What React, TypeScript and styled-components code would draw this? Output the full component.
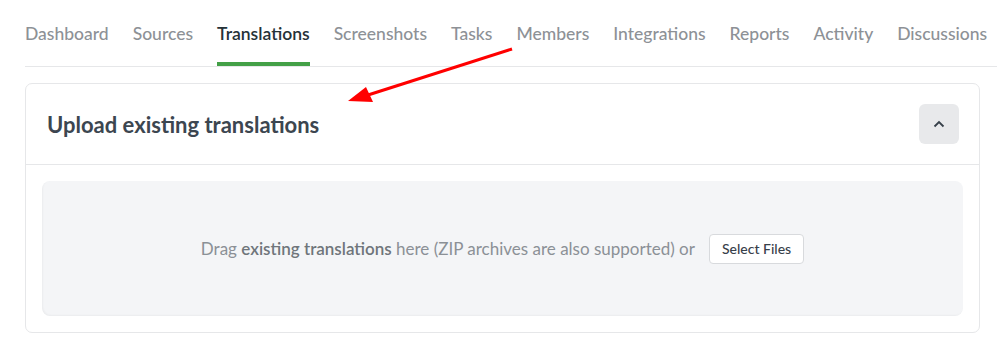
import { createGlobalStyle } from 'styled-components'
import styled from 'styled-components'

const Global = createGlobalStyle`
  body {
    margin: 0;
    background: #fff;
    font-family: Lato, 'Noto Sans', sans-serif;
  }
`

const Page = styled.div`
  position: relative;
  width: 997px;
  height: 342px;
  padding: 0 0 0 25px;
  box-sizing: border-box;
`

const Tabs = styled.nav`
  display: flex;
  gap: 24px;
  height: 66px;
  border-bottom: 1px solid #e6e7e9;
`

const Tab = styled.div<{ $active?: boolean }>`
  display: flex;
  align-items: center;
  height: 100%;
  box-sizing: border-box;
  padding-top: 5px;
  font-size: 17.5px;
  font-weight: ${(p) => (p.$active ? 600 : 500)};
  color: ${(p) => (p.$active ? '#263238' : '#8d9196')};
  border-bottom: 4px solid ${(p) => (p.$active ? '#43a047' : 'transparent')};
  margin-bottom: -1px;
  white-space: nowrap;
`

const Card = styled.section`
  margin-top: 16px;
  width: 955px;
  border: 1px solid #e6e7e9;
  border-radius: 7px;
  box-sizing: border-box;
`

const CardHeader = styled.header`
  display: flex;
  align-items: center;
  justify-content: space-between;
  height: 80px;
  padding: 0 20px 0 21px;
  border-bottom: 1px solid #e6e7e9;
`

const Title = styled.h2`
  margin: 0;
  font-size: 22px;
  font-weight: 700;
  color: #3c4650;
`

const CollapseButton = styled.button`
  width: 40px;
  height: 40px;
  border: none;
  border-radius: 6px;
  background: #e8e9eb;
  display: flex;
  align-items: center;
  justify-content: center;
  padding: 0;
`

const CardBody = styled.div`
  padding: 16px;
`

const Dropzone = styled.div`
  height: 135px;
  border-radius: 8px;
  background: #f4f5f7;
  box-shadow: inset 1px -1px 2px rgba(0, 0, 0, 0.04);
  display: flex;
  align-items: center;
  justify-content: center;
  gap: 14px;
  font-size: 17px;
  color: #8b9096;
`

const Strong = styled.b`
  font-weight: 600;
  color: #6f757b;
`

const SelectButton = styled.button`
  height: 30px;
  padding: 0 12px;
  border: 1px solid #d8dadd;
  border-radius: 4px;
  background: #fff;
  font-family: inherit;
  font-size: 14px;
  font-weight: 500;
  color: #37404a;
`

const Arrow = styled.svg`
  position: absolute;
  left: 0;
  top: 0;
  pointer-events: none;
`

const tabs = [
  'Dashboard',
  'Sources',
  'Translations',
  'Screenshots',
  'Tasks',
  'Members',
  'Integrations',
  'Reports',
  'Activity',
  'Discussions',
]

export default function App() {
  return (
    <Page>
      <Global />
      <Tabs>
        {tabs.map((t) => (
          <Tab key={t} $active={t === 'Translations'}>
            {t}
          </Tab>
        ))}
      </Tabs>
      <Card>
        <CardHeader>
          <Title>Upload existing translations</Title>
          <CollapseButton>
            <svg width="12" height="8" viewBox="0 0 12 8">
              <path d="M1.5 6.5 L6 2 L10.5 6.5" fill="none" stroke="#37404a" strokeWidth="1.8" />
            </svg>
          </CollapseButton>
        </CardHeader>
        <CardBody>
          <Dropzone>
            <span>
              Drag <Strong>existing translations</Strong> here (ZIP archives are also supported) or
            </span>
            <SelectButton>Select Files</SelectButton>
          </Dropzone>
        </CardBody>
      </Card>
      <Arrow width="997" height="342" viewBox="0 0 997 342">
        <line x1="512" y1="49" x2="368" y2="95" stroke="#f00" strokeWidth="3" />
        <polygon points="348,101 366,87 373,102" fill="#f00" />
      </Arrow>
    </Page>
  )
}
